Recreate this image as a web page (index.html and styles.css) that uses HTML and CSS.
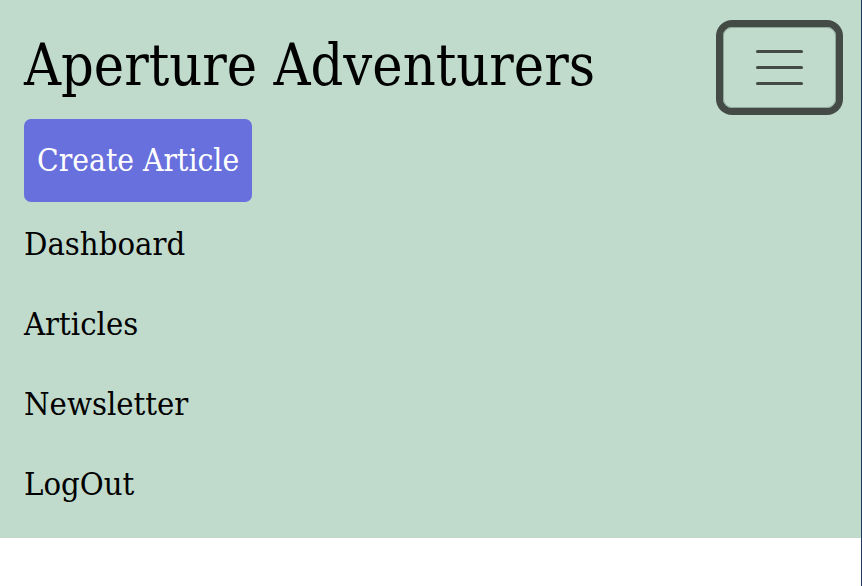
FILE: index.html
```html
<!DOCTYPE html>
<html lang="en">
<head>
<meta charset="utf-8">
<title>Aperture Adventurers</title>
<link rel="stylesheet" href="styles.css">
</head>
<body>
<div class="page">
  <nav class="navbar">
    <div class="top-row">
      <a class="brand" href="#">Aperture Adventurers</a>
      <button class="toggler" type="button" aria-label="Toggle navigation">
        <span class="toggler-icon"><span></span><span></span><span></span></span>
      </button>
    </div>
    <div class="menu">
      <a class="create-btn" href="#">Create Article</a>
      <ul class="nav-list">
        <li><a class="nav-link" href="#">Dashboard</a></li>
        <li><a class="nav-link" href="#">Articles</a></li>
        <li><a class="nav-link" href="#">Newsletter</a></li>
        <li><a class="nav-link" href="#">LogOut</a></li>
      </ul>
    </div>
  </nav>
</div>
</body>
</html>
```

FILE: styles.css
```css
html, body {
  margin: 0;
  padding: 0;
  background: #ffffff;
}
.page {
  min-height: 100vh;
  border-right: 1px solid #1d3a5c;
  box-sizing: border-box;
  font-family: "DejaVu Serif Condensed", "DejaVu Serif", serif;
  font-stretch: condensed;
}
.navbar {
  background: #c0dbcc;
  padding: 19px 25px 10px 24px;
  height: 538px;
  box-sizing: border-box;
}
.top-row {
  display: flex;
  justify-content: space-between;
  align-items: flex-start;
}
.brand {
  color: #000;
  text-decoration: none;
  font-size: 57px;
  line-height: 92px;
}
.toggler {
  width: 113px;
  height: 81px;
  margin: 8px 0 0 0;
  background: transparent;
  border: 1px solid #8fa89a;
  border-radius: 9px;
  box-shadow: 0 0 0 7px #444b47;
  display: flex;
  align-items: center;
  justify-content: center;
  padding: 0;
}
.toggler-icon {
  display: flex;
  flex-direction: column;
  gap: 13px;
  width: 47px;
}
.toggler-icon span {
  display: block;
  height: 3px;
  border-radius: 2px;
  background: #444b47;
}
.menu {
  display: flex;
  flex-direction: column;
  align-items: flex-start;
  margin-top: 8px;
}
.create-btn {
  display: block;
  background: #6770dc;
  color: #fff;
  text-decoration: none;
  font-size: 31.5px;
  line-height: 83px;
  height: 83px;
  padding: 0 13px;
  border-radius: 7px;
}
.nav-list {
  list-style: none;
  margin: 2px 0 0 0;
  padding: 0;
}
.nav-link {
  display: block;
  color: #000;
  text-decoration: none;
  font-size: 32.5px;
  line-height: 80px;
}
```
